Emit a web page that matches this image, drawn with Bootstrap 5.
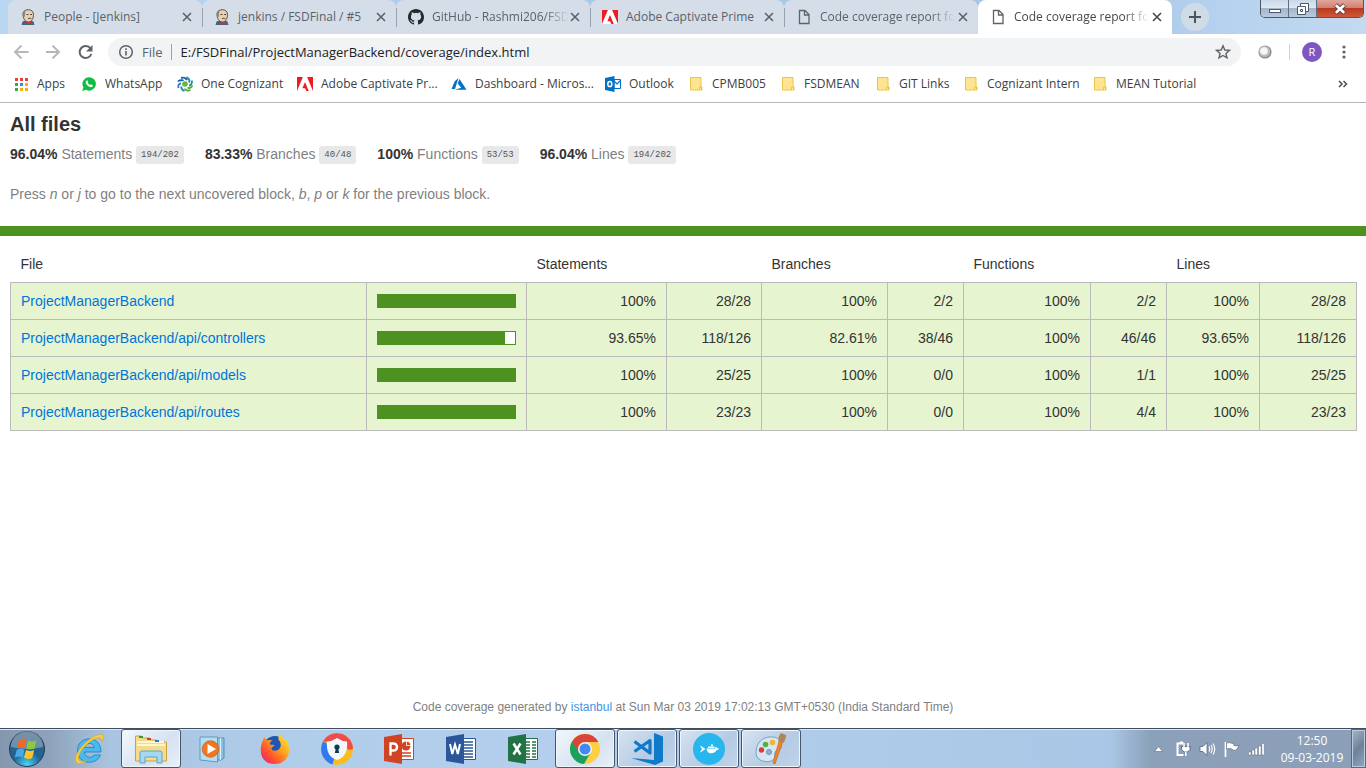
<!DOCTYPE html>
<html lang="en">
<head>
<meta charset="utf-8">
<meta name="viewport" content="width=device-width, initial-scale=1">
<title>Code coverage report for All files</title>
<link href="https://cdn.jsdelivr.net/npm/bootstrap@5.3.0/dist/css/bootstrap.min.css" rel="stylesheet">
<style>
  :root { --ui: "Open Sans", "Noto Sans", sans-serif; --doc: "Liberation Sans", Arial, sans-serif; }
  body { font-family: var(--ui); font-size: 12px; line-height: 16px; color: #3c4043; background: #fff; }
  svg { display: block; flex: none; }
  button { border: 0; background: none; padding: 0; color: inherit; }

  /* tab strip */
  .tabstrip { height: 34px; padding-left: 8px; background: linear-gradient(90deg, #b9d7f2, #a9c9ea 45%, #a5c4e2 80%, #b4d0ee 88%, #c3daf0); }
  .tab { width: 194px; height: 34px; padding: 0 10px 0 12px; border-radius: 8px 8px 0 0; background: #d5dee8; color: #5b6168; }
  .tab + .tab::before { content: ""; position: absolute; left: 0; top: 8px; height: 19px; border-left: 1px solid #98a3b0; }
  .tab.current { background: #fff; color: #45494d; }
  .tab.current::before { display: none; }
  .tab-title { color: inherit; white-space: nowrap; margin-left: 8px; }
  .tab-title.faded { -webkit-mask-image: linear-gradient(90deg, #000 82%, transparent); mask-image: linear-gradient(90deg, #000 82%, transparent); }
  .newtab { width: 28px; height: 28px; margin: 3px 0 0 9px; background: #d0dbe8; color: #4b535c; }
  .winctl { height: 18px; margin-right: 2px; border: 1px solid #4a5869; border-top: 0; border-radius: 0 0 5px 5px; overflow: hidden; }
  .winctl button { width: 28px; background: linear-gradient(#c9d8e8, #dfe8f2 45%, #a3b6ca 50%, #b9cbdd); border-right: 1px solid #5f6f82; }
  .winctl button.shut { width: 46px; border: 0; background: linear-gradient(#dfa79c, #d3806f 45%, #b83a20 50%, #d0573a); }

  /* toolbar */
  .toolbar { height: 35px; padding: 0 14px 0 13px; color: #5f6368; }
  .addr { height: 28px; border-radius: 14px; background: #f1f3f4; padding: 0 10px; margin-left: 14px; }
  .addr .scheme { font-size: 13px; margin: 0 8px; }
  .addr input { font-family: var(--ui); font-size: 13px; line-height: 20px; color: #202124; background: transparent; padding: 0 0 0 9px; border-left: 1px solid #9aa0a6; border-radius: 0; height: 16px; }
  .addr input:focus { background: transparent; box-shadow: none; }
  .rule { width: 1px; height: 16px; background: #cfd2d6; }
  .avatar { width: 20px; height: 20px; margin: 0 14px 0 12px; background: #7e57c2; color: #fff; font-size: 11px; }

  /* bookmarks */
  .bookmarks { display: grid; grid-template-columns: 68px 96px 120px 154px 154px 83px 92px 95px 88px 129px 1fr auto; height: 34px; padding: 0 18px 4px 13px; border-bottom: 1px solid #b3b5b8; }
  .bookmarks a { color: #3c4043; gap: 8px; white-space: nowrap; }

  /* coverage report */
  .report { font-family: var(--doc); font-size: 14px; line-height: 20px; color: #333; }
  .report h1 { font-size: 20px; line-height: 22px; font-weight: 700; color: #333; margin: 0 0 9px; }
  .report a { color: #0074d9; }
  .report .quiet { color: #7f7f7f; }
  .summary { padding: 10px; }
  .hint { margin: 20px 0 12px; }
  .files { padding: 10px 9px 10px 10px; }
  .fraction { font-family: "Liberation Mono", monospace; font-size: 9px; line-height: 12px; color: #555; background: #e8e8e8; padding: 4px 5px; border-radius: 3px; vertical-align: middle; }
  .metrics { gap: 21px; }
  .status { height: 10px; background: #4d9221; }
  .coverage { width: 100%; border-collapse: collapse; table-layout: fixed; }
  .coverage th { font-weight: 400; padding: 9px 0 8px 10px; line-height: 19px; white-space: nowrap; }
  .coverage td { padding: 8px 10px; border: 1px solid #bbb; background: #e6f5d0; text-align: right; }
  .coverage td:first-child { text-align: left; }
  .meter { height: 14px; border: 1px solid #4d9221; background: #fff; }
  .meter div { height: 12px; background: #4d9221; }
  .credit { font-size: 12px; line-height: 16px; padding-bottom: 13px; }
  .credit a { color: #3f96e2; }

  /* taskbar */
  .taskbar { height: 40px; border-top: 1px solid #3f4d5c; box-shadow: inset 0 1px #dbe8f5; background: linear-gradient(90deg, #8497ae, #8ea3bb 50px, #a9c4e0 110px, #b0cdea 300px, #b4cfed 560px, #a9c7e6 1110px, #8ba1b9 1150px, #8ba0b8); }
  .orb { width: 59px; padding-right: 5px; }
  .task { width: 60px; height: 39px; margin-right: 2px; border: 1px solid transparent; border-radius: 3px; }
  .task.open { border-color: #46576b; box-shadow: inset 0 0 0 1px #eef5fc; background: linear-gradient(135deg, #d6e3f2, #b5cbe4 60%, #c0d4ea); }
  .task.bright { background: linear-gradient(135deg, #f3f7fc, #d5e2f0 60%, #e9f1fa); }
  .tray { gap: 8px; color: #fff; }
  .clock { width: 78px; text-align: center; line-height: 17px; }
  .desk { width: 15px; height: 39px; border: 1px solid #56697e; box-shadow: inset 0 0 0 1px #b9cbde; background: linear-gradient(135deg, #a8b6c6, #6e8298 50%, #8ea9c4); }
</style>
</head>
<body class="d-flex flex-column min-vh-100">

<svg width="0" height="0" class="position-absolute" aria-hidden="true">
  <symbol id="i-jenkins" viewBox="0 0 16 16"><path d="M1.500 16l1-3.500 3-1 5 0 3 1 1 3.500z" fill="#48617c"/><path d="M3 5C3 2 5.500.7 8.500.7c3 0 5 2 5 4.800 0 3.500-1.500 7.500-5 7.500C5 13 3 9.500 3 5z" fill="#e6cfb2" stroke="#4a4540" stroke-width=".9"/><path d="M3.200 8C2 4 3.500 1.500 6 1c-.8 1.500-1.300 4-1 6.500z" fill="#8a8378"/><path d="M6.500 5.500h1.900M10.200 5.500h1.900M8 9.800c1-.7 2.300-.6 3.400 0" stroke="#333" fill="none" stroke-width=".9"/><path d="M6.500 12.300l2.500 1.300 2.600-1.300v3L9 14.300l-2.500 1z" fill="#d33833"/></symbol>
  <symbol id="i-github" viewBox="0 0 16 16"><path fill="#24292e" d="M8 0C3.580 0 0 3.580 0 8c0 3.540 2.290 6.530 5.470 7.590.4.070.55-.17.55-.38 0-.19-.01-.82-.01-1.490-2.010.37-2.530-.49-2.690-.94-.09-.23-.48-.94-.82-1.130-.28-.15-.68-.52-.01-.53.63-.01 1.080.58 1.230.82.72 1.210 1.870.87 2.330.66.07-.52.28-.87.51-1.070-1.780-.2-3.640-.89-3.640-3.950 0-.87.31-1.590.82-2.150-.08-.2-.36-1.020.08-2.120 0 0 .67-.21 2.200.82a7.600 7.600 0 0 1 4 0c1.530-1.040 2.200-.82 2.200-.82.44 1.100.16 1.920.08 2.120.51.56.82 1.270.82 2.150 0 3.070-1.870 3.750-3.650 3.950.29.25.54.73.54 1.480 0 1.070-.01 1.930-.01 2.200 0 .21.15.46.55.38A8 8 0 0 0 16 8c0-4.420-3.580-8-8-8z"/></symbol>
  <symbol id="i-adobe" viewBox="0 0 16 16"><path fill="#ed1c24" d="M0 1h16v14H0z"/><path fill="#fff" d="M5.900 1h4.200L16 15h-4.200L8 6.200 5.400 12h2.800l1.100 3H0z" opacity="0"/><path fill="#fff" d="M5.900 1h4.200L16 15h-4.300L8 6 5.400 12.200h2.700L9.300 15H0z"/></symbol>
  <symbol id="i-page" viewBox="0 0 16 16"><path d="M3.500 1.500h5.500l4 4v9h-9.500zM8.500 1.500v4.500H13" fill="none" stroke="#5f6368" stroke-width="1.300"/></symbol>
  <symbol id="i-x" viewBox="0 0 10 10"><path d="M1 1l8 8M9 1L1 9" stroke="currentColor" stroke-width="1.600"/></symbol>
  <symbol id="i-folder" viewBox="0 0 16 16"><path d="M2.500 1.500h10.500v9.500h1v3h-11.500z" fill="#ffe591" stroke="#e8c547"/><path d="M11.500 14v-3h2v3" fill="#ffe591" stroke="#e8c547"/></symbol>
</svg>

<header>
  <div class="tabstrip d-flex">
    <nav class="d-flex" aria-label="Tabs">
      <div class="tab position-relative d-flex align-items-center"><svg width="16" height="16"><use href="#i-jenkins"/></svg><a href="#" class="tab-title text-decoration-none">People - [Jenkins]</a><button class="ms-auto" aria-label="Close tab"><svg width="10" height="10"><use href="#i-x"/></svg></button></div>
      <div class="tab position-relative d-flex align-items-center"><svg width="16" height="16"><use href="#i-jenkins"/></svg><a href="#" class="tab-title text-decoration-none">jenkins / FSDFinal / #5</a><button class="ms-auto" aria-label="Close tab"><svg width="10" height="10"><use href="#i-x"/></svg></button></div>
      <div class="tab position-relative d-flex align-items-center"><svg width="16" height="16"><use href="#i-github"/></svg><a href="#" class="tab-title faded text-decoration-none">GitHub - Rashmi206/FSD</a><button class="ms-auto" aria-label="Close tab"><svg width="10" height="10"><use href="#i-x"/></svg></button></div>
      <div class="tab position-relative d-flex align-items-center"><svg width="16" height="16"><use href="#i-adobe"/></svg><a href="#" class="tab-title text-decoration-none">Adobe Captivate Prime</a><button class="ms-auto" aria-label="Close tab"><svg width="10" height="10"><use href="#i-x"/></svg></button></div>
      <div class="tab position-relative d-flex align-items-center"><svg width="16" height="16"><use href="#i-page"/></svg><a href="#" class="tab-title faded text-decoration-none">Code coverage report fo</a><button class="ms-auto" aria-label="Close tab"><svg width="10" height="10"><use href="#i-x"/></svg></button></div>
      <div class="tab current position-relative d-flex align-items-center"><svg width="16" height="16"><use href="#i-page"/></svg><a href="#" class="tab-title faded text-decoration-none">Code coverage report fo</a><button class="ms-auto" aria-label="Close tab"><svg width="10" height="10"><use href="#i-x"/></svg></button></div>
    </nav>
    <button class="newtab rounded-circle d-flex align-items-center justify-content-center" aria-label="New tab"><svg width="12" height="12" viewBox="0 0 12 12"><path d="M6 0v12M0 6h12" stroke="currentColor" stroke-width="2"/></svg></button>
    <div class="winctl d-flex ms-auto">
      <button class="d-flex align-items-center justify-content-center" aria-label="Minimize"><svg width="14" height="14" viewBox="0 0 14 14"><rect x="1.500" y="7.500" width="11" height="3" fill="#fff" stroke="#4d5868"/></svg></button>
      <button class="d-flex align-items-center justify-content-center" aria-label="Restore"><svg width="14" height="14" viewBox="0 0 14 14"><path d="M4.500 1.500h8v8h-3v3h-8v-8h3z" fill="#fff" stroke="#4d5868"/><path d="M4.500 4.500h5v5M4.500 7.500h2v2h-2z" fill="none" stroke="#4d5868"/></svg></button>
      <button class="shut d-flex align-items-center justify-content-center" aria-label="Close"><svg width="14" height="12" viewBox="0 0 14 12"><path d="M2.500 2l9 8M11.500 2l-9 8" stroke="#5b4048" stroke-width="4.500"/><path d="M2.800 2.200l8.400 7.600M11.200 2.200L2.800 9.800" stroke="#fff" stroke-width="2.600"/></svg></button>
    </div>
  </div>

  <div class="toolbar d-flex align-items-center">
    <button aria-label="Back"><svg width="16" height="16" viewBox="0 0 16 16"><path d="M15.500 8H2M8.500 1.500L2 8l6.500 6.500" fill="none" stroke="#b5b8bb" stroke-width="1.900"/></svg></button>
    <button aria-label="Forward" class="ms-3"><svg width="16" height="16" viewBox="0 0 16 16"><path d="M1 8h13M7.500 1.500L14 8l-6.500 6.500" fill="none" stroke="#b5b8bb" stroke-width="1.900"/></svg></button>
    <button aria-label="Reload" class="ms-3"><svg width="17" height="16" viewBox="0 0 17 16"><path d="M13.500 4.500A6 6 0 1 0 14.300 10" fill="none" stroke="#5f6368" stroke-width="2"/><path d="M15.500 1v6.500H9z" fill="#5f6368"/></svg></button>
    <div class="addr d-flex align-items-center flex-grow-1">
      <svg width="16" height="16" viewBox="0 0 16 16"><circle cx="8" cy="8" r="6.300" fill="none" stroke="#5f6368" stroke-width="1.500"/><path d="M8 7v4.500M8 4.300v1.600" stroke="#5f6368" stroke-width="1.600"/></svg>
      <label for="url" class="scheme">File</label>
      <input id="url" class="form-control border-top-0 border-end-0 border-bottom-0" type="text" value="E:/FSDFinal/ProjectManagerBackend/coverage/index.html">
      <button aria-label="Bookmark this page"><svg width="16" height="16" viewBox="0 0 16 16"><path d="M8 1.800l1.800 4.200 4.600.4-3.500 3 1.100 4.500L8 11.500l-4 2.400 1.100-4.500-3.500-3 4.600-.4z" fill="none" stroke="#5f6368" stroke-width="1.400"/></svg></button>
    </div>
    <button aria-label="Extension" class="ms-3"><svg width="16" height="16" viewBox="0 0 16 16"><circle cx="8" cy="8" r="6.600" fill="#8f8f8f"/><circle cx="7.500" cy="7.500" r="5.600" fill="#bdbdbd"/><circle cx="7" cy="7" r="3.800" fill="#f6f6f6"/></svg></button>
    <span class="rule ms-3"></span>
    <button class="avatar rounded-circle flex-shrink-0" aria-label="Profile">R</button>
    <button aria-label="Menu"><svg width="16" height="16" viewBox="0 0 16 16"><circle cx="8" cy="3" r="1.600" fill="#5f6368"/><circle cx="8" cy="8" r="1.600" fill="#5f6368"/><circle cx="8" cy="13" r="1.600" fill="#5f6368"/></svg></button>
  </div>

  <nav class="bookmarks align-items-center" aria-label="Bookmarks">
    <a href="#" class="d-flex align-items-center text-decoration-none"><svg width="16" height="16" viewBox="0 0 16 16"><g fill="#ea4335"><path d="M2 2h3v3H2zM7 2h3v3H7zM12 2h3v3h-3z"/></g><path d="M2 7h3v3H2z" fill="#34a853"/><path d="M7 7h3v3H7z" fill="#4285f4"/><path d="M12 7h3v3h-3zM7 12h3v3H7zM12 12h3v3h-3z" fill="#fbaf05"/><path d="M2 12h3v3H2z" fill="#34a853"/></svg>Apps</a>
    <a href="#" class="d-flex align-items-center text-decoration-none"><svg width="16" height="16" viewBox="0 0 16 16"><path d="M8.200 1.200a6.700 6.700 0 1 1-3.200 12.600L1.200 15l1.200-3.700A6.700 6.700 0 0 1 8.200 1.200z" fill="#12bc42"/><path d="M5.700 4.500c1-.4 1.300.6 1.500 1.300 0 .6-.5.700-.5 1 .5 1 1.300 1.800 2.400 2.300.4 0 .7-.9 1.200-.7l1.500.8c.2 1.500-1.300 2.200-2.400 1.900C7 10.500 5 8.300 4.700 6.500c0-.9.500-1.700 1-2z" fill="#fff"/></svg>WhatsApp</a>
    <a href="#" class="d-flex align-items-center text-decoration-none"><svg width="16" height="16" viewBox="0 0 16 16" fill="none" stroke-width="1.900"><circle cx="8" cy="8" r="2.800" fill="#6ab63c"/><path d="M6.500 4C5 5 3 3 1 5.500M10 4.200C9 2 6.500 1 4 2" stroke="#1767a9"/><path d="M12 6.500c1-2 0-4-2.500-5.500M12 9.500c2 0 3-1.500 3-5" stroke="#1d94a5"/><path d="M10.500 11.500c1.500 1 3.500.5 5-2M8 12.500c0 1.500 2.500 2.800 5.500 1.500" stroke="#57af3d"/><path d="M4.500 10.500c-.5 2 .5 3.500 3 4.500M4 7.500C2 7.500.8 9 1.500 12" stroke="#2b86bd"/></svg>One Cognizant</a>
    <a href="#" class="d-flex align-items-center text-decoration-none"><svg width="16" height="16"><use href="#i-adobe"/></svg>Adobe Captivate Pr...</a>
    <a href="#" class="d-flex align-items-center text-decoration-none"><svg width="16" height="16" viewBox="0 0 16 16"><path d="M7.500 2L3.800 5.200.5 13H4zM8.500 3L6.700 7.500l3.500 4.200L4 13.800h11.500z" fill="#0072c6"/></svg>Dashboard - Micros...</a>
    <a href="#" class="d-flex align-items-center text-decoration-none"><svg width="16" height="16" viewBox="0 0 16 16"><path d="M9 3.500h6.500v9H9z" fill="#fff" stroke="#0072c6"/><path d="M9 5l3 3 3.500-3.500" fill="none" stroke="#0072c6" stroke-width="1.200"/><path d="M0 2l9.500-2v16L0 14z" fill="#0072c6"/><ellipse cx="4.800" cy="8" rx="2" ry="2.600" fill="none" stroke="#fff" stroke-width="1.500"/></svg>Outlook</a>
    <a href="#" class="d-flex align-items-center text-decoration-none"><svg width="16" height="16"><use href="#i-folder"/></svg>CPMB005</a>
    <a href="#" class="d-flex align-items-center text-decoration-none"><svg width="16" height="16"><use href="#i-folder"/></svg>FSDMEAN</a>
    <a href="#" class="d-flex align-items-center text-decoration-none"><svg width="16" height="16"><use href="#i-folder"/></svg>GIT Links</a>
    <a href="#" class="d-flex align-items-center text-decoration-none"><svg width="16" height="16"><use href="#i-folder"/></svg>Cognizant Intern</a>
    <a href="#" class="d-flex align-items-center text-decoration-none"><svg width="16" height="16"><use href="#i-folder"/></svg>MEAN Tutorial</a>
    <button aria-label="More bookmarks"><svg width="10" height="8" viewBox="0 0 10 8"><path d="M1 1l3 3-3 3M5.500 1l3 3-3 3" fill="none" stroke="#4b4f54" stroke-width="1.500"/></svg></button>
  </nav>
</header>

<main class="report flex-grow-1 d-flex flex-column">
  <section class="summary">
    <h1>All files</h1>
    <div class="metrics d-flex">
      <div><strong>96.04%</strong> <span class="quiet">Statements</span> <span class="fraction">194/202</span></div>
      <div><strong>83.33%</strong> <span class="quiet">Branches</span> <span class="fraction">40/48</span></div>
      <div><strong>100%</strong> <span class="quiet">Functions</span> <span class="fraction">53/53</span></div>
      <div><strong>96.04%</strong> <span class="quiet">Lines</span> <span class="fraction">194/202</span></div>
    </div>
    <p class="quiet hint">Press <em>n</em> or <em>j</em> to go to the next uncovered block, <em>b</em>, <em>p</em> or <em>k</em> for the previous block.</p>
  </section>
  <div class="status"></div>
  <section class="files">
    <table class="coverage">
      <colgroup><col><col style="width:160px"><col style="width:140px"><col style="width:95px"><col style="width:126px"><col style="width:76px"><col style="width:127px"><col style="width:76px"><col style="width:93px"><col style="width:97px"></colgroup>
      <thead><tr><th scope="col">File</th><th></th><th scope="col" colspan="2">Statements</th><th scope="col" colspan="2">Branches</th><th scope="col" colspan="2">Functions</th><th scope="col" colspan="2">Lines</th></tr></thead>
      <tbody>
        <tr><td><a href="#" class="text-decoration-none">ProjectManagerBackend</a></td><td><div class="meter"><div style="width:100%"></div></div></td><td>100%</td><td>28/28</td><td>100%</td><td>2/2</td><td>100%</td><td>2/2</td><td>100%</td><td>28/28</td></tr>
        <tr><td><a href="#" class="text-decoration-none">ProjectManagerBackend/api/controllers</a></td><td><div class="meter"><div style="width:93%"></div></div></td><td>93.65%</td><td>118/126</td><td>82.61%</td><td>38/46</td><td>100%</td><td>46/46</td><td>93.65%</td><td>118/126</td></tr>
        <tr><td><a href="#" class="text-decoration-none">ProjectManagerBackend/api/models</a></td><td><div class="meter"><div style="width:100%"></div></div></td><td>100%</td><td>25/25</td><td>100%</td><td>0/0</td><td>100%</td><td>1/1</td><td>100%</td><td>25/25</td></tr>
        <tr><td><a href="#" class="text-decoration-none">ProjectManagerBackend/api/routes</a></td><td><div class="meter"><div style="width:100%"></div></div></td><td>100%</td><td>23/23</td><td>100%</td><td>0/0</td><td>100%</td><td>4/4</td><td>100%</td><td>23/23</td></tr>
      </tbody>
    </table>
  </section>
  <footer class="credit quiet text-center mt-auto">Code coverage generated by <a href="#" class="text-decoration-none">istanbul</a> at Sun Mar 03 2019 17:02:13 GMT+0530 (India Standard Time)</footer>
</main>

<div class="taskbar d-flex align-items-center">
  <button class="orb d-flex justify-content-center" aria-label="Start"><svg width="38" height="38" viewBox="0 0 38 38"><defs><radialGradient id="g-orb" cx=".5" cy=".95" r=".9"><stop offset="0" stop-color="#4fd3f5"/><stop offset=".45" stop-color="#1d6394"/><stop offset="1" stop-color="#3f5f80"/></radialGradient></defs><circle cx="19" cy="19" r="17.500" fill="url(#g-orb)" stroke="#213c58"/><path d="M3 17A16 16 0 0 1 35 17Q19 21 3 17z" fill="#fff" opacity=".3"/><path d="M11 10q4.500-2.500 7.500-.5l-1.700 8.300q-3.800-1.800-7.800.5z" fill="#ee6a2b"/><path d="M20 10.500q4.500 2 8.500-.3l-2 8.300q-4.500 2-8.200 0z" fill="#8fc742"/><path d="M8.700 19.800q4-2 7.800-.3l-1.800 8q-4-2-8 .3z" fill="#49a9e4"/><path d="M18 20q4.500 2 8.200 0l-2 8q-4 2-8.200-.2z" fill="#fdc52b"/></svg></button>
  <button class="task d-flex align-items-center justify-content-center" aria-label="Internet Explorer"><svg width="32" height="32" viewBox="0 0 32 32"><path d="M28 19H11.500c.5 6.500 8 6.500 9.500 3h6.500C23.500 33 4.500 31.500 4.500 17.500 4.500 2 28.500 1.500 28 19zM11.600 14.500h9.600c-.5-5.500-9-5.500-9.600 0z" fill="#4cb9ee" stroke="#1e86cb" stroke-width=".9"/><path d="M4 30C-3 23 18 0 29 1.500c2 .5 2 4 .2 7C29.500 4 25 3.500 18 8 9 14 2.500 25 7 28c2 1 5-.3 7-1.300-3 2.800-7 5-10 3.300z" fill="#f8cf39" stroke="#d9a01c" stroke-width=".5"/></svg></button>
  <button class="task open bright d-flex align-items-center justify-content-center" aria-label="Windows Explorer"><svg width="34" height="32" viewBox="0 0 34 32"><path d="M1.500 3h6l1 2h7l1 2h6l1 2h9v19h-31z" fill="#f4dc8c" stroke="#c9a342"/><path d="M3 9h27M3 12h28" stroke="#fff6cd" stroke-width="2"/><path d="M5 3h4v2H5z" fill="#2b9b3b"/><path d="M13 5h4v2h-4z" fill="#cf3b2c"/><path d="M21 7h4v2h-4z" fill="#2c7dd1"/><path d="M6 30V20q0-2 2-2h18q2 0 2 2v10h-5v-6H11v6z" fill="#a6d8f2" stroke="#5ba4cd"/></svg></button>
  <button class="task d-flex align-items-center justify-content-center" aria-label="Media Player"><svg width="30" height="30" viewBox="0 0 30 30"><path d="M8 4h18v20l-3 2H8z" fill="#86c3e2" stroke="#4b93bb"/><path d="M2 3h17.500v25L2 26z" fill="#b9dcee" stroke="#5a9cbf"/><path d="M22.500 4v22" stroke="#dff0f8"/><circle cx="12.500" cy="15" r="8.300" fill="#f2751f" stroke="#c9520c" stroke-width=".6"/><path d="M9.500 10l8.500 5-8.500 5z" fill="#fff"/></svg></button>
  <button class="task d-flex align-items-center justify-content-center" aria-label="Firefox"><svg width="32" height="32" viewBox="0 0 32 32"><defs><linearGradient id="g-fox" x1="1" y1="0" x2="0" y2="1"><stop offset="0" stop-color="#fff044"/><stop offset=".4" stop-color="#ffa21c"/><stop offset=".7" stop-color="#ff5032"/><stop offset="1" stop-color="#e31587"/></linearGradient></defs><circle cx="16" cy="15" r="12" fill="#1f56b0"/><path d="M4 7c.5-1.500 1-2 2-3 0 2 1 3 2 3.300 2-.5 4-.3 5.500.3-2 1-3 2.500-2.500 4l4.500.5c0 1.500-3 2-3 3.500 0 3 6 3 8 0 3-4 0-8-1-8.500V1c3 2 5 3.500 7 6.500l.5-1.500c6 9 4 25-11.500 25C2 31-1 18 4 7z" fill="url(#g-fox)"/></svg></button>
  <button class="task d-flex align-items-center justify-content-center" aria-label="Secure browser"><svg width="34" height="34" viewBox="0 0 34 34"><circle cx="17" cy="17" r="16" fill="#fbbc1f"/><path d="M17 17L3 9.500A16 16 0 0 0 12.500 32.400z" fill="#3179f2"/><path d="M3 9.500A16 16 0 0 1 33 17l-4 1-8-7z" fill="#ee4d4c"/><path d="M17 6q5 3.500 10 3.500C28 20 24 26 17 28 10 26 6 20 7 9.500q5 0 10-3.500z" fill="#f4f8fd"/><circle cx="17" cy="15" r="2.600" fill="#0c3b51"/><path d="M16 16h2l1.200 5h-4.400z" fill="#0c3b51"/></svg></button>
  <button class="task d-flex align-items-center justify-content-center" aria-label="PowerPoint"><svg width="32" height="32" viewBox="0 0 32 32"><path d="M16 5.500h14.500v21H16z" fill="#fff" stroke="#d04423"/><circle cx="23" cy="13" r="4.500" fill="#d04423"/><path d="M23.500 12.500V8a5 5 0 0 1 4.500 4.500z" fill="#d04423" stroke="#fff" stroke-width=".8"/><path d="M18 20h10M18 23h10" stroke="#d04423" stroke-width="1.400"/><path d="M1 4l18-3v30L1 28z" fill="#d04423"/><path d="M7.500 22.500V10.500H10q4 0 4 3.500t-4 3.500H7.500" fill="none" stroke="#fff" stroke-width="2.400"/></svg></button>
  <button class="task d-flex align-items-center justify-content-center" aria-label="Word"><svg width="32" height="32" viewBox="0 0 32 32"><path d="M16 5.500h14.500v21H16z" fill="#fff" stroke="#2b579a"/><path d="M18 9h10M18 12h10M18 15h10M18 18h10M18 21h10M18 24h10" stroke="#2b579a" stroke-width="1.300"/><path d="M1 4l18-3v30L1 28z" fill="#2b579a"/><path d="M5 11l2.300 10L10 11.500 12.800 21 15 11" fill="none" stroke="#fff" stroke-width="2"/></svg></button>
  <button class="task d-flex align-items-center justify-content-center" aria-label="Excel"><svg width="32" height="32" viewBox="0 0 32 32"><path d="M16 5.500h14.500v21H16z" fill="#fff" stroke="#217346"/><path d="M19 9h4M25 9h4M19 12h4M25 12h4M19 15h4M25 15h4M19 18h4M25 18h4M19 21h4M25 21h4M19 24h4M25 24h4" stroke="#217346" stroke-width="1.700"/><path d="M1 4l18-3v30L1 28z" fill="#217346"/><path d="M6.500 10.500l7 11M13.500 10.500l-7 11" stroke="#fff" stroke-width="2.500"/></svg></button>
  <button class="task open bright d-flex align-items-center justify-content-center" aria-label="Chrome"><svg width="32" height="32" viewBox="0 0 32 32"><circle cx="16" cy="16" r="15" fill="#fdcf43"/><path d="M16 16L3 8.500A15 15 0 0 0 15 31l7-12z" fill="#1aa15f"/><path d="M3 8.500A15 15 0 0 1 29.300 9H16l-6 10z" fill="#db4437"/><circle cx="16" cy="16" r="7" fill="#f4f4f4"/><circle cx="16" cy="16" r="5.500" fill="#4587f3"/></svg></button>
  <button class="task open d-flex align-items-center justify-content-center" aria-label="Visual Studio Code"><svg width="34" height="34" viewBox="0 0 34 34"><path d="M24 1l9 3.500v25L25 33 1 26l23 2z" fill="#0e7ac9"/><path d="M4.500 9.500L20 21V8.500L4.500 19.500" fill="none" stroke="#0e7ac9" stroke-width="3.200" stroke-linejoin="round"/></svg></button>
  <button class="task open d-flex align-items-center justify-content-center" aria-label="Docker"><svg width="32" height="32" viewBox="0 0 32 32"><circle cx="16" cy="16" r="16" fill="#27b7ec"/><path d="M7.500 13l4.500 3-4.500 3 1.800-3z" fill="#fff" stroke="#fff" stroke-width=".6"/><path d="M13.500 15.500h8.500l1-2 1.200 1.700 1.800.3q-.5 1.500-2.300 1.500-1.700 3.300-6 3.300-3.700-.3-4.200-4.800z" fill="#fff"/><path d="M15 13.500h6.500v1.500H15zM18 11.500h2v1.500h-2z" fill="#fff"/></svg></button>
  <button class="task open d-flex align-items-center justify-content-center" aria-label="Paint"><svg width="34" height="34" viewBox="0 0 34 34"><path d="M15 5c9-1 14 4 12 11-1 3-5 1-6 4-1 2 1 4-1 7-4 5-18 3-18-6C2 12 7 6 15 5z" fill="#d5e7f4" stroke="#7e9fb8"/><circle cx="7.500" cy="18" r="2.700" fill="#dd3b33"/><circle cx="11.500" cy="12.500" r="2.800" fill="#53b044"/><circle cx="18.500" cy="10.500" r="2.800" fill="#f5b52b"/><circle cx="15" cy="20" r="2.500" fill="#8fb3d4" stroke="#6d93b5"/><path d="M28.500 10L21 32l-2-1 6-22z" fill="#ef8429" stroke="#c06010" stroke-width=".6"/><path d="M24.500 9q-.5-5 2.500-8l5 2q0 5-3 8z" fill="#b08558"/></svg></button>
  <div class="tray d-flex align-items-center ms-auto">
    <button aria-label="Show hidden icons"><svg width="9" height="6" viewBox="0 0 9 6"><path d="M4.500.5L8.500 5.500H.5z" fill="#fff" stroke="#4a5a6e" stroke-width=".5"/></svg></button>
    <svg class="ms-1" width="16" height="16" viewBox="0 0 16 16"><path d="M8 2.500H2.500v11.500h6" fill="none" stroke="#fff" stroke-width="2"/><path d="M5 2v-1h3v1" fill="#fff" stroke="#fff"/><path d="M6.500 5.500h8.500v3l-2.500 2.500h-3.500L6.500 8.500z" fill="#fff" stroke="#39465a" stroke-width=".7"/><path d="M9 2v4M13 2v4M10.800 11v4" stroke="#fff" stroke-width="1.500"/></svg>
    <svg width="17" height="16" viewBox="0 0 17 16"><path d="M1 5.500h3L8 1.500v13l-4-4H1z" fill="#fff" stroke="#4a5a6e" stroke-width=".7"/><path d="M10 5.500q1.500 2.500 0 5M12 4q2.500 4 0 8M14 2.500q3.500 5.500 0 11" fill="none" stroke="#fff" stroke-width="1.100"/></svg>
    <svg width="16" height="16" viewBox="0 0 16 16"><path d="M1.500 1v15" stroke="#fff" stroke-width="1.700"/><path d="M2.500 2q3-1 6 .5t1.500 2q2 .8 5-.3-1 3.500-3.500 5-2 .8-3.500-1.200-2.500-1-5.500 0z" fill="#fff" stroke="#4a5a6e" stroke-width=".6"/></svg>
    <svg width="17" height="16" viewBox="0 0 17 16"><path d="M.5 11h2.500v3H.5zM4 9h2.500v5H4zM7 7h2.500v7H7zM10.500 5H13v9h-2.500zM13.800 2.500h2.500V14h-2.500z" fill="#fff" stroke="#4a5a6e" stroke-width=".4"/></svg>
    <div class="clock"><div>12:50</div><div>09-03-2019</div></div>
  </div>
  <button class="desk" aria-label="Show desktop"></button>
</div>

<script src="https://cdn.jsdelivr.net/npm/bootstrap@5.3.0/dist/js/bootstrap.bundle.min.js"></script>
</body>
</html>
